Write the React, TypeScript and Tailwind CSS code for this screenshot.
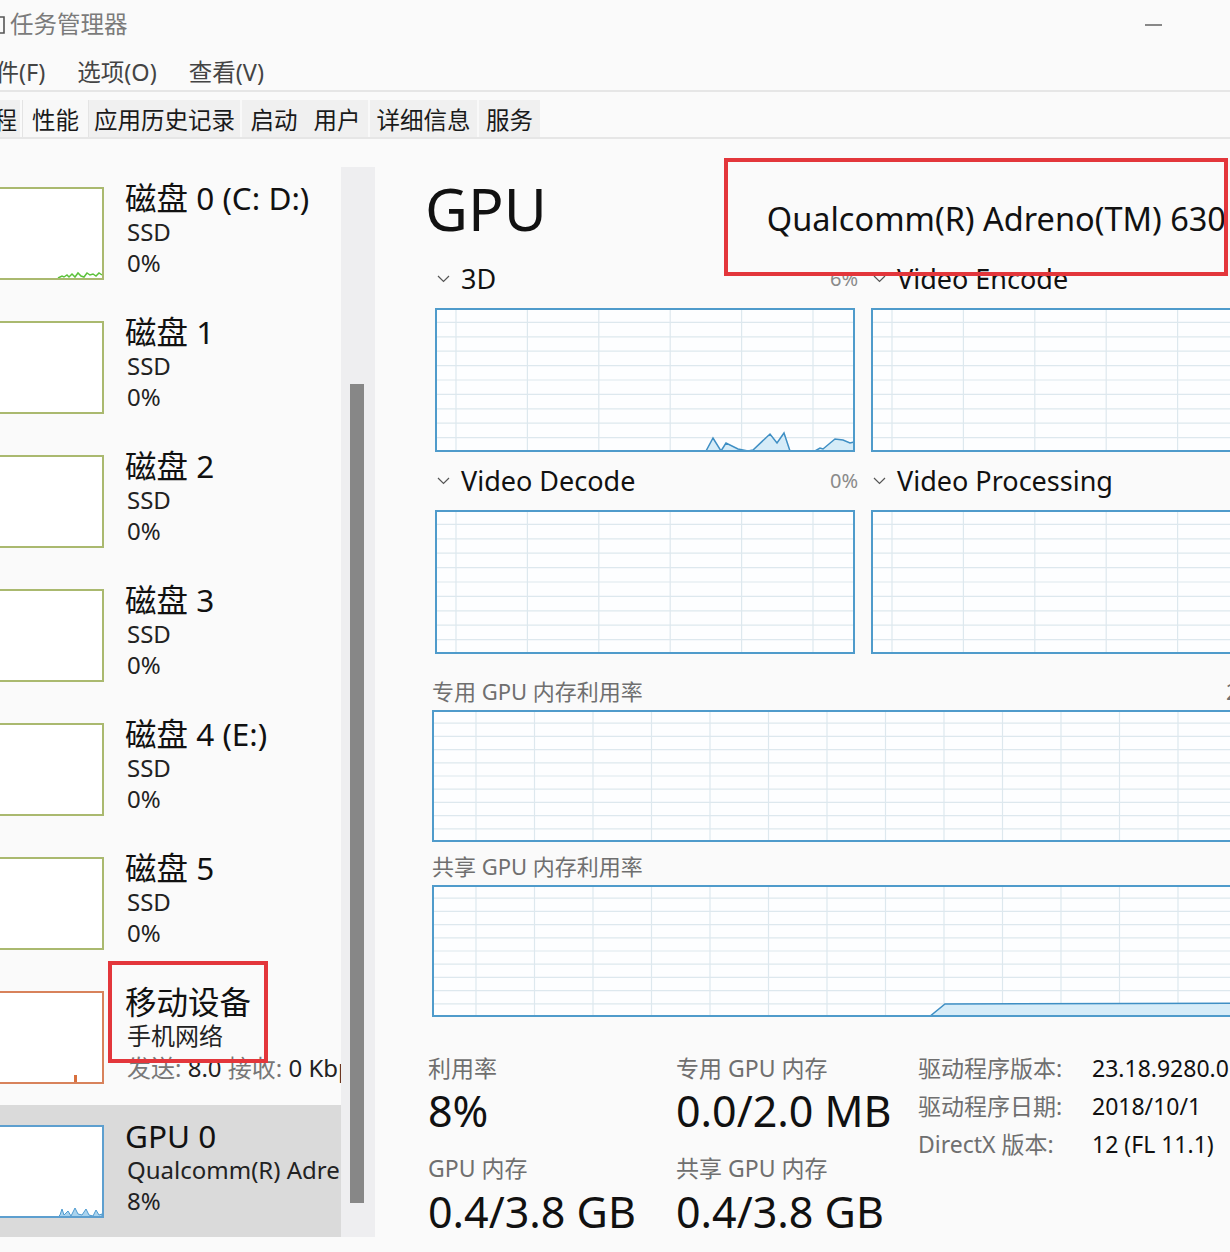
import React from 'react';

type GridProps = {
  w: number;
  h: number;
  rows: number;
  colStart: number;
  colStep: number;
  children?: React.ReactNode;
};

function Grid({ w, h, rows, colStart, colStep, children }: GridProps) {
  const cols: number[] = [];
  for (let x = colStart; x < w; x += colStep) cols.push(x);
  const lines: number[] = [];
  for (let i = 1; i < rows; i++) lines.push((h * i) / rows);
  return (
    <svg width={w} height={h} className="block shrink-0">
      <rect x={0} y={0} width={w} height={h} fill="#fdfeff" />
      {cols.map((x) => (
        <line key={'c' + x} x1={x} y1={0} x2={x} y2={h} stroke="#dde8ee" strokeWidth={1.2} />
      ))}
      {lines.map((y) => (
        <line key={'r' + y} x1={0} y1={y} x2={w} y2={y} stroke="#dde8ee" strokeWidth={1.2} />
      ))}
      {children}
      <rect x={1} y={1} width={w - 2} height={h - 2} fill="none" stroke="#4f9bcb" strokeWidth={2} />
    </svg>
  );
}

function Chevron() {
  return (
    <svg width={13} height={8} viewBox="0 0 13 8" className="shrink-0">
      <polyline points="1,1 6.5,6.5 12,1" fill="none" stroke="#555" strokeWidth={1.2} />
    </svg>
  );
}

function ChartHead({ title, pct }: { title: string; pct?: string }) {
  return (
    <div className="flex h-[36px] items-center">
      <div className="ml-[2px]">
        <Chevron />
      </div>
      <span className="ml-[11px] text-[27px] leading-[36px] text-[#111]">{title}</span>
      {pct && <span className="ml-auto mr-[-3px] text-[20px] leading-[36px] text-[#8a8a8a]">{pct}</span>}
    </div>
  );
}

const pts3d =
  '0,143 271,143 278,130 286,143 291,135 303,141 313,143 318,142 335,126 342,135 349,125 355,143 380,143 385,140 388,141 400,131 408,132 415,135 419,134';

type Disk = { title: string; sub: string; val: string };

const disks: Disk[] = [
  { title: '磁盘 0 (C: D:)', sub: 'SSD', val: '0%' },
  { title: '磁盘 1', sub: 'SSD', val: '0%' },
  { title: '磁盘 2', sub: 'SSD', val: '0%' },
  { title: '磁盘 3', sub: 'SSD', val: '0%' },
  { title: '磁盘 4 (E:)', sub: 'SSD', val: '0%' },
  { title: '磁盘 5', sub: 'SSD', val: '0%' },
];

function Thumb({ color, children }: { color: string; children?: React.ReactNode }) {
  return (
    <div className="relative mt-[20px] ml-[-4px] h-[93px] w-[108px] shrink-0 bg-white">
      <svg width={108} height={93} className="absolute inset-0">
        {children}
        <rect x={1} y={1} width={106} height={91} fill="none" stroke={color} strokeWidth={2} />
      </svg>
    </div>
  );
}

export default function App() {
  return (
    <div className="relative flex h-[1252px] w-[1230px] flex-col overflow-hidden bg-[#fafafa] font-['Noto_Sans','Noto_Sans_CJK_SC',sans-serif] text-[#111]">
      {/* title bar */}
      <div className="flex h-[50px] shrink-0 items-center">
        <svg width={8} height={20} className="shrink-0">
          <path d="M0 2 H4 V18 H0" fill="none" stroke="#555" strokeWidth={1.6} />
        </svg>
        <span className="ml-[2px] text-[23.5px] text-[#7b7b7b]">任务管理器</span>
        <div className="ml-auto mr-[68px] h-[1.5px] w-[17px] bg-[#888]" />
      </div>

      {/* menu */}
      <div className="flex h-[42px] shrink-0 items-center gap-[32px] border-b-2 border-[#e6e6e6] pt-[6px] text-[23.5px] text-[#444]">
        <span className="ml-[-28px]">文件(F)</span>
        <span>选项(O)</span>
        <span>查看(V)</span>
      </div>

      {/* tabs */}
      <div className="mt-[8px] flex h-[39px] shrink-0 border-b-2 border-[#e6e6e6] text-[23.5px] leading-[40px] text-[#1a1a1a]">
        <div className="flex w-[20px] justify-end overflow-hidden bg-[#f0f0f0] pr-[3px]">
          <span className="shrink-0">进程</span>
        </div>
        <div className="ml-[2px] w-[67px] border-x border-[#e4e4e4] bg-[#f8f8f8] text-center">性能</div>
        <div className="w-[153px] border-r-2 border-[#f9f9f9] bg-[#f0f0f0] text-center">应用历史记录</div>
        <div className="w-[64px] bg-[#f0f0f0] text-center">启动</div>
        <div className="w-[64px] border-r-2 border-[#f9f9f9] bg-[#f0f0f0] text-center">用户</div>
        <div className="w-[109px] border-r-2 border-[#f9f9f9] bg-[#f0f0f0] text-center">详细信息</div>
        <div className="w-[61px] bg-[#f0f0f0] text-center">服务</div>
      </div>

      {/* body */}
      <div className="flex min-h-0 flex-1">
        {/* sidebar */}
        <div className="w-[341px] shrink-0 overflow-hidden whitespace-nowrap pt-[28px]">
          {disks.map((d, i) => (
            <div key={d.title} className="flex h-[134px]">
              <Thumb color="#aab96f">
                {i === 0 && (
                  <polyline
                    points="62,91 66,89 68,90 71,88 73,90 76,87 79,90 82,86 85,89 88,90 91,86 94,88 97,87 100,89 103,86 106,88"
                    fill="none"
                    stroke="#5cc23a"
                    strokeWidth={1.5}
                  />
                )}
              </Thumb>
              <div className="ml-[23px] mt-[13px]">
                <div className="ml-[-2px] text-[31.5px] leading-[36px]">{d.title}</div>
                <div className="text-[24px] leading-[31px] text-[#222]">{d.sub}</div>
                <div className="text-[24px] leading-[31px] text-[#222]">{d.val}</div>
              </div>
            </div>
          ))}

          {/* mobile device */}
          <div className="flex h-[134px]">
            <Thumb color="#d8825b">
              <rect x={78} y={84} width={3} height={8} fill="#d8703e" />
            </Thumb>
            <div className="ml-[23px] mt-[13px]">
              <div className="ml-[-2px] text-[31.5px] leading-[36px]">移动设备</div>
              <div className="text-[24px] leading-[31px] text-[#222]">手机网络</div>
              <div className="text-[24px] leading-[33px] text-[#222]">
                <span className="text-[#777]">发送:</span> 8.0 <span className="text-[#777]">接收:</span> 0 Kbps
              </div>
            </div>
          </div>

          {/* gpu 0 */}
          <div className="flex h-[132px] bg-[#dadada]">
            <Thumb color="#5d9fcf">
              <path
                d="M62 92 L64 90 L66 84 L68 90 L72 86 L75 91 L79 83 L82 89 L86 90 L90 84 L93 90 L97 91 L100 85 L103 90 L106 89 L106 92 Z"
                fill="#a9d3ee"
                stroke="#4d9ad0"
                strokeWidth={1}
              />
            </Thumb>
            <div className="ml-[23px] mt-[13px]">
              <div className="ml-[-2px] text-[31.5px] leading-[36px]">GPU 0</div>
              <div className="text-[24px] leading-[31px] text-[#222]">Qualcomm(R) Adreno(TM) 630</div>
              <div className="text-[24px] leading-[31px] text-[#222]">8%</div>
            </div>
          </div>
        </div>

        {/* scrollbar */}
        <div className="w-[34px] shrink-0 pt-[28px]">
          <div className="h-[1070px] w-[34px] bg-[#eeeef0] pt-[217px]">
            <div className="ml-[9px] h-[819px] w-[14px] bg-[#878787]" />
          </div>
        </div>

        {/* main */}
        <div className="min-w-0 flex-1 overflow-hidden whitespace-nowrap">
          <div className="ml-[50px] mt-[37px] flex h-[64px] items-baseline">
            <span className="text-[59px] leading-[64px] text-[#111]">GPU</span>
            <span className="ml-[220px] text-[32.5px] text-[#111]">Qualcomm(R) Adreno(TM) 630</span>
          </div>

          <div className="ml-[60px] mt-[21px] flex w-[856px] gap-[16px]">
            <div className="w-[420px] shrink-0">
              <ChartHead title="3D" pct="6%" />
              <div className="mt-[11px]">
                <Grid w={420} h={144} rows={10} colStart={21} colStep={71.4}>
                  <polygon points={pts3d + ' 419,144 0,144'} fill="#d6ecf8" />
                  <polyline points={pts3d} fill="none" stroke="#3f8fc4" strokeWidth={1.5} />
                </Grid>
              </div>
            </div>
            <div className="w-[420px] shrink-0">
              <ChartHead title="Video Encode" />
              <div className="mt-[11px]">
                <Grid w={420} h={144} rows={10} colStart={21} colStep={71.4} />
              </div>
            </div>
          </div>

          <div className="ml-[60px] mt-[11px] flex w-[856px] gap-[16px]">
            <div className="w-[420px] shrink-0">
              <ChartHead title="Video Decode" pct="0%" />
              <div className="mt-[11px]">
                <Grid w={420} h={144} rows={10} colStart={21} colStep={71.4} />
              </div>
            </div>
            <div className="w-[420px] shrink-0">
              <ChartHead title="Video Processing" />
              <div className="mt-[11px]">
                <Grid w={420} h={144} rows={10} colStart={21} colStep={71.4} />
              </div>
            </div>
          </div>

          <div className="ml-[57px] mt-[23px] flex h-[28px] items-center text-[22px] leading-[28px] text-[#6f6f6f]">
            <span className="w-[794px] shrink-0">专用 GPU 内存利用率</span>
            <span>2.0 GB</span>
          </div>
          <div className="ml-[57px] mt-[5px]">
            <Grid w={860} h={132} rows={10} colStart={44} colStep={58.5} />
          </div>

          <div className="ml-[57px] mt-[10px] flex h-[28px] items-center text-[22px] leading-[28px] text-[#6f6f6f]">
            <span>共享 GPU 内存利用率</span>
          </div>
          <div className="ml-[57px] mt-[5px]">
            <Grid w={860} h={132} rows={10} colStart={44} colStep={58.5}>
              <polygon points="497,132 513,119 700,118.5 860,118 860,132" fill="#d6ecf8" />
              <polyline points="497,132 513,119 700,118.5 860,118" fill="none" stroke="#3f8fc4" strokeWidth={1.5} />
            </Grid>
          </div>

          {/* stats */}
          <div className="mt-[36px] flex items-start">
            <div className="ml-[53px] w-[248px] shrink-0">
              <div className="text-[23px] leading-[30px] text-[#6f6f6f]">利用率</div>
              <div className="mt-[4px] text-[43px] leading-[48px] text-[#111]">8%</div>
              <div className="mt-[18px] text-[23px] leading-[30px] text-[#6f6f6f]">GPU 内存</div>
              <div className="mt-[5px] text-[43px] leading-[48px] text-[#111]">0.4/3.8 GB</div>
            </div>
            <div className="w-[242px] shrink-0">
              <div className="text-[23px] leading-[30px] text-[#6f6f6f]">专用 GPU 内存</div>
              <div className="mt-[4px] text-[43px] leading-[48px] text-[#111]">0.0/2.0 MB</div>
              <div className="mt-[18px] text-[23px] leading-[30px] text-[#6f6f6f]">共享 GPU 内存</div>
              <div className="mt-[5px] text-[43px] leading-[48px] text-[#111]">0.4/3.8 GB</div>
            </div>
            <div className="mt-[-4px] grid auto-rows-[38px] grid-cols-[174px_auto] text-[23px] leading-[38px]">
              <span className="text-[#6f6f6f]">驱动程序版本:</span>
              <span>23.18.9280.0</span>
              <span className="text-[#6f6f6f]">驱动程序日期:</span>
              <span>2018/10/1</span>
              <span className="text-[#6f6f6f]">DirectX 版本:</span>
              <span>12 (FL 11.1)</span>
            </div>
          </div>
        </div>
      </div>

      {/* annotation boxes */}
      <div className="absolute left-[724px] top-[158px] h-[118px] w-[504px] border-[4px] border-[#e3363b]" />
      <div className="absolute left-[108px] top-[961px] h-[102px] w-[160px] border-[4px] border-[#e3363b]" />
    </div>
  );
}
